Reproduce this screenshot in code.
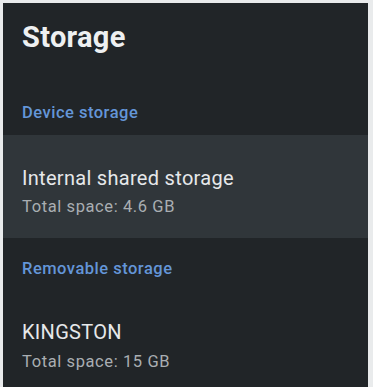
export default function App() {
  return (
    <div className="h-[387px] w-[373px] bg-[#e9ebec] pl-[3px] pr-[5px] pt-[3px]" style={{ fontFamily: "Roboto, 'Noto Sans', sans-serif" }}>
      <div className="h-full bg-[#212528]">
        <h1 className="px-[19px] pt-[16px] text-[29px] font-bold leading-[36px] tracking-[0.3px] text-[#eef0f1]">Storage</h1>

        <div className="px-[19px] pt-[48px] pb-[12px] text-[16.5px] font-medium leading-[20px] tracking-[0.5px] text-[#6496d8]">Device storage</div>

        <div className="bg-[#30363a] px-[19px] pt-[30px] pb-[21px]">
          <div className="text-[20px] leading-[26px] tracking-[0.3px] text-[#e6e8ea]">Internal shared storage</div>
          <div className="mt-[6px] text-[16.5px] leading-[20px] tracking-[0.6px] text-[#a9aeb2]">Total space: 4.6 GB</div>
        </div>

        <div className="px-[19px] pt-[21px] text-[16.5px] font-medium leading-[20px] tracking-[0.5px] text-[#6496d8]">Removable storage</div>

        <div className="px-[19px] pt-[40px]">
          <div className="text-[20px] leading-[26px] tracking-[0.3px] text-[#e6e8ea]">KINGSTON</div>
          <div className="mt-[7px] text-[16.5px] leading-[20px] tracking-[0.6px] text-[#a9aeb2]">Total space: 15 GB</div>
        </div>
      </div>
    </div>
  )
}
